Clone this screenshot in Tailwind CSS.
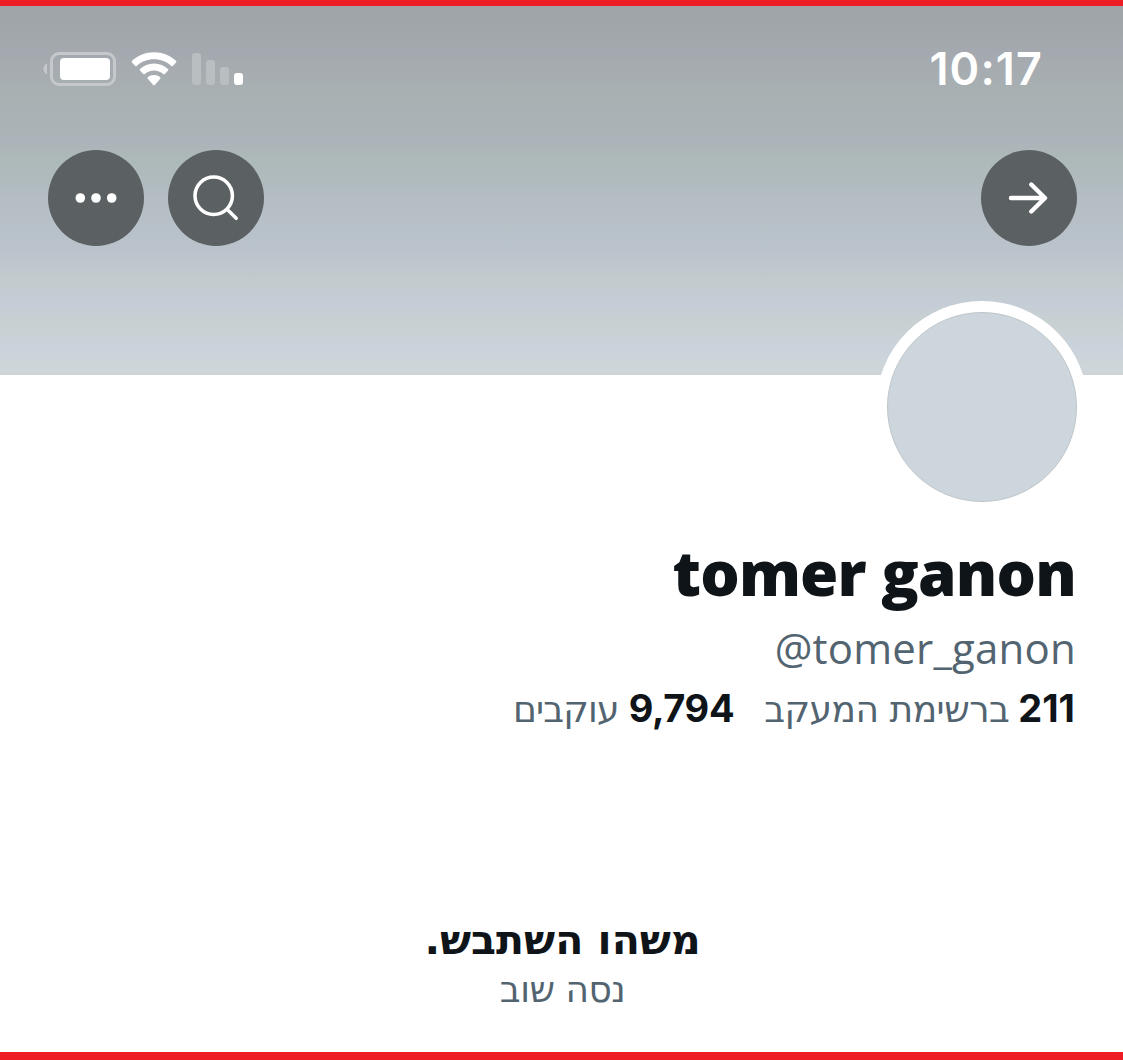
<!DOCTYPE html>
<html lang="he" dir="rtl">
<head>
    <meta charset="UTF-8">
    <meta name="viewport" content="width=device-width, initial-scale=1.0">
    <title>tomer ganon</title>
    <script src="https://cdn.jsdelivr.net/npm/@tailwindcss/browser@4"></script>
</head>
<body class="bg-white font-['Open_Sans','Noto_Sans',sans-serif] text-[#0f1419]">
    <div class="h-[1060px] w-full overflow-hidden border-t-6 border-b-8 border-[#ee1c25] flex flex-col">
        <header class="h-[369px] shrink-0 bg-[linear-gradient(to_bottom,#9fa4a9_0px,#a4a9af_48px,#a8b0b2_85px,#a9b3b5_120px,#adb3bb_134px,#adb8b9_151px,#b3bdc2_190px,#bac3cb_240px,#c1cacd_272px,#c5ced6_300px,#c8d0d1_315px,#cad3db_341px,#ced6d9_366px,#cfd1d5_369px)]">
            <!-- Status bar -->
            <div class="flex items-center justify-between pt-[33px] pr-[80px] pl-[43px]">
                <span class="font-['Inter',sans-serif] text-[45px] leading-[60px] font-semibold tracking-[1.1px] text-white">10:17</span>
                <div class="flex items-center" dir="ltr">
                    <svg class="h-[36px] w-[74px]" viewBox="0 0 74 36" fill="none">
                        <path d="M4 12.5C1.7 13.7.5 15.5.5 18S1.7 22.3 4 23.5Z" fill="#c5c9cc"/>
                        <rect x="8.5" y="2.5" width="63" height="31" rx="7.5" stroke="#c5c9cc" stroke-width="3"/>
                        <rect x="17" y="7" width="50" height="22" rx="4" fill="#fff"/>
                    </svg>
                    <svg class="ml-[14px] h-[36px] w-[46px]" viewBox="0 0 46 36" fill="#fff">
                        <path d="M23 1.2C14.5 1.2 6.8 4.4 1 9.8Q.2 10.6 1 11.4L4.2 14.9Q5 15.6 5.8 14.9C10.4 10.6 16.3 8.3 23 8.3S35.6 10.6 40.2 14.9Q41 15.6 41.8 14.9L45 11.4Q45.8 10.6 45 9.8C39.2 4.4 31.5 1.2 23 1.2Z"/>
                        <path d="M23 12.5C17.6 12.5 12.7 14.6 9 17.9Q8.2 18.7 9 19.5L12.2 23Q13 23.7 13.8 23C16.3 20.8 19.5 19.5 23 19.5S29.7 20.8 32.2 23Q33 23.7 33.8 23L37 19.5Q37.8 18.7 37 17.9C33.3 14.6 28.4 12.5 23 12.5Z"/>
                        <path d="M23 24C20.6 24 18.5 24.8 16.8 26.2Q16 27 16.8 27.8L22.2 33.9Q23 34.7 23.8 33.9L29.2 27.8Q30 27 29.2 26.2C27.5 24.8 25.4 24 23 24Z"/>
                    </svg>
                    <svg class="ml-[15px] h-[36px] w-[52px]" viewBox="0 0 52 36">
                        <g fill="#b9bec1">
                            <rect x="0" y="2" width="9" height="32" rx="3"/>
                            <rect x="14" y="9" width="9" height="25" rx="3"/>
                            <rect x="28" y="16" width="9" height="18" rx="3"/>
                        </g>
                        <rect x="42" y="22" width="9" height="12" rx="3" fill="#fff"/>
                    </svg>
                </div>
            </div>

            <!-- Nav buttons -->
            <div class="mt-[51px] flex justify-between pr-[46px] pl-12">
                <button class="size-24 rounded-full bg-[#5b6062]">
                    <svg class="size-24" viewBox="0 0 96 96" fill="none" stroke="#fff" stroke-width="4.4" stroke-linecap="round" stroke-linejoin="round">
                        <path d="M30 48H63.5M50.3 34.5L64 48L50.3 61.5"/>
                    </svg>
                </button>
                <div class="flex gap-6">
                    <button class="size-24 rounded-full bg-[#5b6062]">
                        <svg class="size-24" viewBox="0 0 96 96" fill="none" stroke="#fff" stroke-width="3.5" stroke-linecap="round">
                            <circle cx="45.7" cy="45.7" r="18.7"/>
                            <path d="M59.3 59.5L68.2 68.3"/>
                        </svg>
                    </button>
                    <button class="size-24 rounded-full bg-[#5b6062]">
                        <svg class="size-24" viewBox="0 0 96 96" fill="#fff">
                            <circle cx="32.3" cy="48" r="4.8"/>
                            <circle cx="48" cy="48" r="4.8"/>
                            <circle cx="63.7" cy="48" r="4.8"/>
                        </svg>
                    </button>
                </div>
            </div>
        </header>

        <main class="flex flex-col items-start pr-12">
            <div class="-mt-[74px] -mr-[13px] size-[212px] shrink-0 rounded-full bg-white p-[11px]">
                <div class="size-[190px] rounded-full border border-[#bfc6c9] bg-[#cdd6dd]"></div>
            </div>

            <h1 class="mt-[19px] -mr-[1px] text-[62px] leading-[80px] font-extrabold tracking-[-0.8px]" dir="ltr">tomer ganon</h1>
            <p class="mt-[8px] -mr-[1px] text-[42px] leading-[56px] tracking-[0.2px] text-[#536471]" dir="ltr">@tomer_ganon</p>

            <div class="mt-[4px] flex items-baseline text-[36px] leading-[56px] text-[#536471]">
                <span class="font-['Inter',sans-serif] text-[38px] font-bold text-[#0f1419]">211</span>
                <span class="mr-[9px] font-['DejaVu_Sans',sans-serif] tracking-[-0.5px]">ברשימת המעקב</span>
                <span class="mr-[30px] font-['Inter',sans-serif] text-[38px] font-bold tracking-[-0.4px] text-[#0f1419]">9,794</span>
                <span class="mr-[10px] font-['DejaVu_Sans',sans-serif] tracking-[-0.8px]">עוקבים</span>
            </div>
        </main>

        <section class="mt-[174px] flex flex-col items-center pl-[2px]">
            <h2 class="font-['DejaVu_Sans',sans-serif] text-[41px] leading-[56px] font-bold">משהו השתבש.</h2>
            <p class="font-['DejaVu_Sans',sans-serif] text-[36px] leading-[44px] tracking-[-0.5px] text-[#536471]">נסה שוב</p>
        </section>
    </div>
</body>
</html>
